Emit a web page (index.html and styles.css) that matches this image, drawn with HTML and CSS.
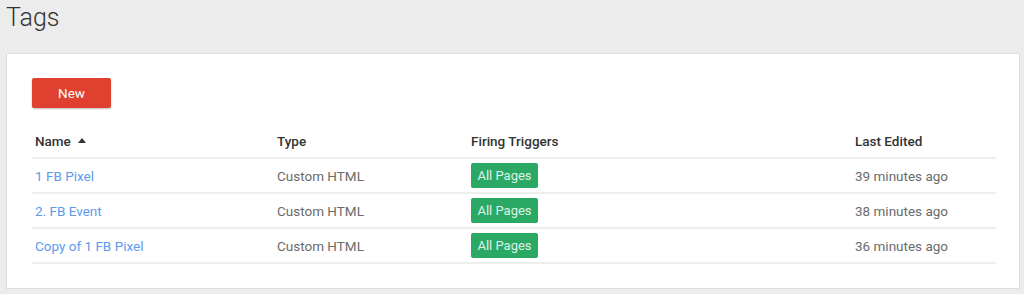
FILE: index.html
```html
<!DOCTYPE html>
<html lang="en">

<head>
    <meta charset="UTF-8">
    <meta name="viewport" content="width=device-width, initial-scale=1.0">
    <title>Tags</title>
    <link rel="stylesheet" href="styles.css">
</head>

<body>
    <h1 class="page-title">Tags</h1>

    <div class="card">
        <button class="btn-new">New</button>

        <table class="tag-table">
            <colgroup>
                <col class="col-name">
                <col class="col-type">
                <col class="col-triggers">
                <col class="col-edited">
            </colgroup>
            <thead>
                <tr>
                    <th>Name <span class="sort-arrow"></span></th>
                    <th>Type</th>
                    <th>Firing Triggers</th>
                    <th>Last Edited</th>
                </tr>
            </thead>
            <tbody>
                <tr>
                    <td><a href="#">1 FB Pixel</a></td>
                    <td>Custom HTML</td>
                    <td><span class="trigger">All Pages</span></td>
                    <td>39 minutes ago</td>
                </tr>
                <tr>
                    <td><a href="#">2. FB Event</a></td>
                    <td>Custom HTML</td>
                    <td><span class="trigger">All Pages</span></td>
                    <td>38 minutes ago</td>
                </tr>
                <tr>
                    <td><a href="#">Copy of 1 FB Pixel</a></td>
                    <td>Custom HTML</td>
                    <td><span class="trigger">All Pages</span></td>
                    <td>36 minutes ago</td>
                </tr>
            </tbody>
        </table>
    </div>
</body>

</html>
```

FILE: styles.css
```css
body {
    margin: 0;
    padding: 0 4px 0 6px;
    background-color: #ececec; /* Light gray page */
    font-family: Roboto, 'Liberation Sans', sans-serif;
    color: #333;
}
.page-title {
    margin: 0;
    height: 53px;
    font-size: 25px;
    font-weight: 300;
    line-height: 36px;
}
.card {
    background-color: #fff;
    border: 1px solid #dedede;
    box-shadow: 0 1px 1px rgba(0, 0, 0, 0.06);
    padding: 24px 23px 22px 25px;
    height: 188px;
}
.btn-new {
    display: block;
    width: 79px;
    height: 30px;
    padding: 0;
    background-color: #df4030;
    color: #fff;
    border: none;
    border-radius: 2px;
    box-shadow: 0 1px 2px rgba(0, 0, 0, 0.25);
    font-family: inherit;
    font-size: 13.5px;
    cursor: pointer;
}
.tag-table {
    width: 100%;
    margin-top: 17px;
    border-collapse: collapse;
    table-layout: fixed;
    font-size: 13.5px;
}
.col-name { width: 242px; }
.col-type { width: 194px; }
.col-triggers { width: 384px; }
.tag-table th {
    height: 32px;
    padding: 0 3px;
    text-align: left;
    font-weight: 500;
    color: #333;
    border-bottom: 2px solid #eeeeee;
}
.tag-table td {
    height: 33px;
    padding: 0 3px;
    color: #6b6b6b;
    border-bottom: 2px solid #eeeeee;
}
.tag-table a {
    color: #5b9bef;
    text-decoration: none;
}
.sort-arrow {
    display: inline-block;
    margin-left: 4px;
    vertical-align: 3px;
    border-left: 4px solid transparent;
    border-right: 4px solid transparent;
    border-bottom: 5px solid #333;
}
.trigger {
    display: inline-block;
    width: 67px;
    height: 25px;
    line-height: 25px;
    text-align: center;
    background-color: #2aa965;
    color: #dff2e6;
    border-radius: 2px;
    font-size: 13px;
}
```
